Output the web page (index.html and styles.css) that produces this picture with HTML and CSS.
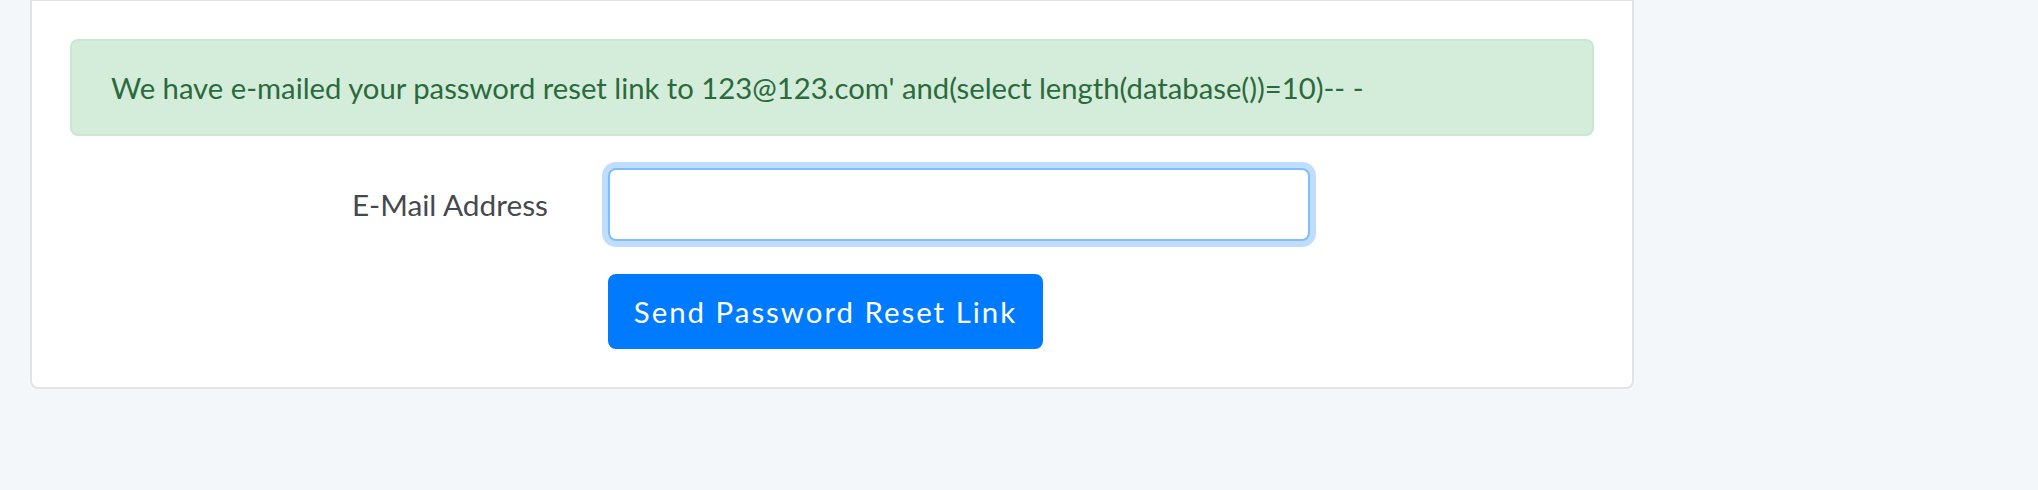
FILE: index.html
```html
<!DOCTYPE html>
<html lang="en">
<head>
<meta charset="utf-8">
<title>Reset Password</title>
<link rel="stylesheet" href="styles.css">
</head>
<body>
<main class="page">
  <div class="card">
    <div class="card-body">
      <div class="alert alert-success">We have e-mailed your password reset link to 123@123.com' and(select length(database())=10)-- -</div>
      <form class="reset-form">
        <div class="form-row">
          <label class="form-label" for="email">E-Mail Address</label>
          <div class="form-field">
            <input id="email" class="form-input" type="email" name="email">
          </div>
        </div>
        <div class="form-row form-row-last">
          <div class="form-spacer"></div>
          <div class="form-field">
            <button type="submit" class="btn-primary">Send Password Reset Link</button>
          </div>
        </div>
      </form>
    </div>
  </div>
</main>
</body>
</html>
```
FILE: styles.css
```css
html, body {
  margin: 0;
  padding: 0;
}

body {
  background: #f4f7fa;
  font-family: "Lato", "Liberation Sans", sans-serif;
  color: #212529;
  width: 2038px;
  height: 490px;
  overflow: hidden;
}

.page {
  padding-left: 30px;
}

.card {
  width: 1604px;
  box-sizing: border-box;
  background: #ffffff;
  border: 2px solid #e2e3e4;
  border-top-width: 1px;
  border-radius: 0 0 8px 8px;
}

.card-body {
  padding: 38px 38px 38px 38px;
}

.alert {
  box-sizing: border-box;
  height: 97px;
  padding: 23px 39px;
  border: 2px solid #c9e8d0;
  border-radius: 8px;
  background: #d4edda;
  color: #2b6a3c;
  font-size: 29.25px;
  line-height: 47px;
  white-space: nowrap;
  margin-bottom: 32px;
}

.reset-form {
  margin: 0;
}

.form-row {
  display: flex;
  margin-bottom: 33px;
}

.form-row-last {
  margin-bottom: 0;
}

.form-label,
.form-spacer {
  box-sizing: border-box;
  width: 508px;
  flex: none;
  padding-right: 30px;
}

.form-label {
  height: 73px;
  display: flex;
  align-items: center;
  justify-content: flex-end;
  font-size: 29.8px;
  color: #45494e;
}

.form-field {
  box-sizing: border-box;
  width: 762px;
  flex: none;
  padding-left: 30px;
  padding-right: 30px;
}

.form-input {
  display: block;
  box-sizing: border-box;
  width: 702px;
  height: 73px;
  margin: 0;
  padding: 12px 24px;
  border: 2px solid #80bdff;
  border-radius: 8px;
  background: #ffffff;
  box-shadow: 0 0 0 6px rgba(0, 123, 255, 0.25);
  outline: none;
  font-family: inherit;
  font-size: 29px;
}

.btn-primary {
  display: block;
  box-sizing: border-box;
  width: 435px;
  height: 75px;
  margin: 0;
  padding: 0;
  border: 2px solid #007bff;
  border-radius: 8px;
  background: #007bff;
  color: #ffffff;
  font-family: inherit;
  font-size: 29.4px;
  letter-spacing: 2px;
  text-align: center;
  cursor: pointer;
}
```
